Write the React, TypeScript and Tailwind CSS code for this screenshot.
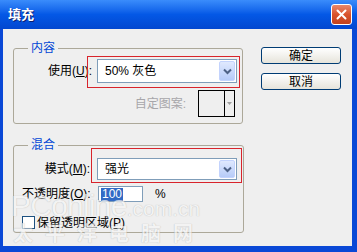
import React from "react";

const font = { fontFamily: '"Liberation Sans", "Noto Sans CJK SC", sans-serif' };

function Combo({ value, height }: { value: string; height: string }) {
    return (
        <div className={`flex w-[140px] ${height} items-stretch border border-[#7f9db9] bg-white p-px`}>
            <div className="flex flex-1 items-center pl-[6px] text-[12px] text-black">{value}</div>
            <div className="flex w-[16px] items-center justify-center rounded-[2px] border border-[#c3d3fd] bg-gradient-to-b from-[#e0e9fe] to-[#b6cbf8]">
                <svg width="9" height="7" viewBox="0 0 9 7">
                    <path d="M1 1.5 L4.5 5 L8 1.5" fill="none" stroke="#4d6185" strokeWidth="2" />
                </svg>
            </div>
        </div>
    );
}

function XpButton({ children }: { children: React.ReactNode }) {
    return (
        <button className="flex h-[17px] w-[80px] items-center justify-center rounded-[3px] border border-[#003c74] bg-gradient-to-b from-white to-[#e6e4db] text-[12px] leading-none text-black">
            {children}
        </button>
    );
}

export default function App() {
    return (
        <div className="flex h-[252px] w-[357px] flex-col overflow-hidden bg-[#0a48d6]" style={font}>
            <div className="flex h-[29px] items-center justify-between bg-gradient-to-b from-[#3a8cfb] via-[#0458e6] to-[#0247d0] pl-[8px] pr-[5px]">
                <span className="text-[13px] font-bold text-white [text-shadow:1px_1px_#0a1e70]">填充</span>
                <div className="flex h-[21px] w-[21px] items-center justify-center rounded-[3px] border border-white bg-gradient-to-b from-[#e8876a] via-[#d9532c] to-[#c2421e]">
                    <svg width="11" height="11" viewBox="0 0 11 11">
                        <path d="M1.5 1.5 L9.5 9.5 M9.5 1.5 L1.5 9.5" stroke="white" strokeWidth="2" strokeLinecap="round" />
                    </svg>
                </div>
            </div>

            <div className="relative ml-[3px] h-[217px] w-[349px] bg-[#efefef] text-[12px] text-black">
                <div className="flex">
                    <div className="ml-[10px] flex flex-col">
                        <fieldset className="mt-[12px] w-[230px] rounded-[3px] border border-[#aca899] pb-[6px]">
                            <legend className="ml-[14px] px-[3px] text-[12px] leading-[14px] text-[#0046d5]">内容</legend>
                            <div className="relative mt-[4px] flex items-center">
                                <div className="w-[78px] text-right">
                                    使用(<span className="underline">U</span>):
                                </div>
                                <div className="ml-[5px]">
                                    <Combo value="50% 灰色" height="h-[24px]" />
                                </div>
                                <div className="absolute left-[73px] top-[-3px] h-[32px] w-[153px] border border-[#d8242c]" />
                            </div>
                            <div className="mt-[7px] flex items-center justify-end pr-[7px]">
                                <span className="mr-[12px] text-[#a7a6aa]">自定图案:</span>
                                <div className="flex h-[27px] w-[37px] border border-black bg-[#efefef]">
                                    <div className="flex-1" />
                                    <div className="flex w-[10px] items-center justify-center border-l border-black">
                                        <svg width="5" height="3" viewBox="0 0 5 3">
                                            <path d="M0 0 L5 0 L2.5 3 Z" fill="#a0a0a0" />
                                        </svg>
                                    </div>
                                </div>
                            </div>
                        </fieldset>

                        <fieldset className="mt-[14px] w-[231px] rounded-[3px] border border-[#aca899] pb-[3px]">
                            <legend className="ml-[14px] px-[3px] text-[12px] leading-[14px] text-[#0046d5]">混合</legend>
                            <div className="relative mt-[6px] flex items-center">
                                <div className="w-[76px] text-right">
                                    模式(<span className="underline">M</span>):
                                </div>
                                <div className="ml-[7px]">
                                    <Combo value="强光" height="h-[22px]" />
                                </div>
                                <div className="absolute left-[77px] top-[-10px] h-[35px] w-[151px] border border-[#d8242c]" />
                            </div>
                            <div className="mt-[6px] flex h-[16px] items-center">
                                <div className="ml-[8px] w-[76px]">
                                    不透明度(<span className="underline">O</span>):
                                </div>
                                <div className="flex h-[16px] w-[45px] items-center border border-[#7f9db9] bg-white pl-[2px]">
                                    <span className="bg-[#316ac5] px-px leading-[13px] text-white">100</span>
                                </div>
                                <span className="ml-[12px]">%</span>
                            </div>
                            <div className="mt-[14px] flex h-[13px] items-center">
                                <div className="ml-[8px] h-[13px] w-[13px] border border-[#1c5180] bg-white" />
                                <span className="ml-[2px]">
                                    保留透明区域(<span className="underline">P</span>)
                                </span>
                            </div>
                        </fieldset>
                    </div>

                    <div className="ml-[17px] mt-[18px] flex flex-col gap-[9px]">
                        <XpButton>确定</XpButton>
                        <XpButton>取消</XpButton>
                    </div>
                </div>

                <div className="pointer-events-none absolute left-[8px] top-[162px] flex flex-col opacity-70">
                    <div className="flex items-baseline">
                        <span className="text-[30px] leading-[30px] tracking-tight text-[#f6f6f6] [text-shadow:0_0_1px_#999]">PConline</span>
                        <span className="text-[21px] leading-[21px] text-[#f6f6f6] [text-shadow:0_0_1px_#999]">.com.cn</span>
                    </div>
                    <span className="ml-[2px] mt-[2px] text-[20px] font-bold leading-[22px] tracking-[12px] text-[#f6f6f6] [text-shadow:0_0_1px_#999]">太平洋电脑网</span>
                </div>
            </div>
        </div>
    );
}
